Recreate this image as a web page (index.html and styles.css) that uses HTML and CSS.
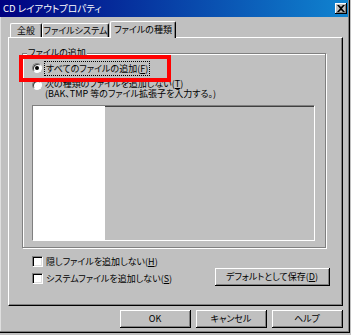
FILE: index.html
```html
<!DOCTYPE html>
<html>

<head>
  <meta name="viewport" content="width=device-width,initial-scale=1">
  <link rel="stylesheet" href="styles.css">
</head>

<body>
  <div class="window">
    <div class="titlebar">
      <span class="title">CD レイアウトプロパティ</span>
      <span class="close">
        <svg width="8" height="7" viewBox="0 0 8 7"><path d="M0 0h2l2 2 2-2h2L5 3.5 8 7H6L4 5 2 7H0l3-3.5z" fill="#000"/></svg>
      </span>
    </div>

    <!-- Tabs -->
    <div class="tabs">
      <div class="tab tab-general">全般</div>
      <div class="tab tab-fs">ファイルシステム</div>
      <div class="tab tab-types active">ファイルの種類</div>
    </div>

    <div class="panel">
      <div class="group">
        <div class="group-title">ファイルの追加</div>

        <div class="radio-row first">
          <span class="radio checked"></span>
          <span class="label focus">すべてのファイルの追加(<u>F</u>)</span>
        </div>

        <div class="radio-row second">
          <span class="radio"></span>
          <span class="label">次の種類のファイルを追加しない(<u>T</u>)<br>(BAK、TMP 等のファイル拡張子を入力する。)</span>
        </div>

        <div class="listbox">
          <div class="list-white"></div>
        </div>

        <!-- highlight box over the first option -->
        <div class="mark"></div>
      </div>

      <div class="options">
        <div class="checks">
          <div class="check-row"><span class="check"></span>隠しファイルを追加しない(<u>H</u>)</div>
          <div class="check-row"><span class="check"></span>システムファイルを追加しない(<u>S</u>)</div>
        </div>
        <button class="btn btn-save">デフォルトとして保存(<u>D</u>)</button>
      </div>
    </div>

    <div class="buttons">
      <button class="btn btn-main">OK</button>
      <button class="btn btn-main">キャンセル</button>
      <button class="btn btn-main">ヘルプ</button>
    </div>
  </div>
</body>

</html>
```

FILE: styles.css
```css
/* Base */

body {
  margin: 0;
  background-color: #c0c0c0;
  font-family: "Noto Sans CJK JP", "Noto Sans", sans-serif;
  font-size: 9px;
  font-feature-settings: "palt";
  color: #000;
  white-space: nowrap;
}

u {
  text-decoration: underline;
  text-underline-offset: 1px;
}

/* Window frame */

.window {
  width: 350px;
  height: 333px;
  background-color: #c0c0c0;
  box-shadow: inset -1px -1px 0 #000, inset -2px -2px 0 #808080, inset 1px 0 0 #dfdfdf;
}

.titlebar {
  width: 348px;
  height: 17px;
  display: flex;
  align-items: center;
  justify-content: space-between;
  background: linear-gradient(to right, #000080, #1084d0);
  color: #fff;
}

.title {
  padding-left: 3px;
  font-size: 9.5px;
  line-height: 17px;
}

.close {
  width: 12px;
  height: 11px;
  margin-right: 1px;
  display: flex;
  align-items: center;
  justify-content: center;
  background-color: #c0c0c0;
  box-shadow: inset -1px -1px 0 #000, inset 1px 1px 0 #fff, inset -2px -2px 0 #808080;
}

/* Tabs */

.tabs {
  display: flex;
  align-items: flex-end;
  height: 16px;
  margin-top: 4px;
  padding-left: 10px;
}

.tab {
  position: relative;
  box-sizing: border-box;
  height: 14px;
  line-height: 13px;
  text-align: center;
  border-top: 1px solid #fff;
  border-left: 1px solid #fff;
  border-right: 1px solid #000;
  border-radius: 2px 2px 0 0;
  box-shadow: inset -1px 0 0 #808080;
}

.tab-general {
  width: 32px;
}

.tab-fs {
  width: 67px;
}

.tab.active {
  width: 66px;
  height: 17px;
  line-height: 15px;
  margin-left: 1px;
  margin-bottom: -1px;
  background-color: #c0c0c0;
  z-index: 1;
}

/* Panel */

.panel {
  box-sizing: border-box;
  width: 335px;
  height: 269px;
  margin-left: 8px;
  border-top: 1px solid #fff;
  border-left: 1px solid #fff;
  border-right: 1px solid #000;
  border-bottom: 1px solid #000;
  box-shadow: inset -1px -1px 0 #808080;
}

.group {
  position: relative;
  box-sizing: border-box;
  width: 304px;
  height: 195px;
  margin: 15px 0 0 13px;
  border: 1px solid #808080;
  box-shadow: inset 1px 1px 0 #fff, 1px 1px 0 #fff;
}

.group-title {
  width: max-content;
  height: 12px;
  line-height: 12px;
  margin: -7px 0 0 4px;
  padding: 0 1px;
  background-color: #c0c0c0;
}

/* Radio buttons */

.radio-row {
  display: flex;
  align-items: flex-start;
  padding-left: 9px;
}

.radio-row.first {
  margin-top: 2px;
  height: 14px;
  align-items: center;
}

.radio-row.second {
  margin-top: 4px;
}

.radio {
  box-sizing: border-box;
  width: 10px;
  height: 10px;
  flex: none;
  border-radius: 50%;
  background-color: #fff;
  border: 1px solid #808080;
  border-right-color: #fff;
  border-bottom-color: #fff;
  box-shadow: inset 1px 1px 0 #404040;
  display: flex;
  align-items: center;
  justify-content: center;
}

.radio.checked::after {
  content: "";
  width: 4px;
  height: 4px;
  border-radius: 50%;
  background-color: #000;
}

.radio-row.second .radio {
  margin-top: 1px;
}

.label {
  margin-left: 3px;
  line-height: 12px;
}

.radio-row.second .label {
  line-height: 10px;
}

.label.focus {
  padding: 0 1px;
  outline: 1px dotted #000;
  line-height: 13px;
}

/* List box */

.listbox {
  box-sizing: border-box;
  width: 283px;
  height: 136px;
  margin: 6px 0 0 9px;
  border-top: 1px solid #808080;
  border-left: 1px solid #808080;
  border-right: 1px solid #fff;
  border-bottom: 1px solid #fff;
  box-shadow: inset 1px 1px 0 #404040;
}

.list-white {
  width: 72px;
  height: 100%;
  background-color: #fff;
}

/* Red highlight */

.mark {
  position: absolute;
  top: 1px;
  left: -4px;
  width: 152px;
  height: 27px;
  box-sizing: border-box;
  border: 4px solid #ff0000;
}

/* Options below the group */

.options {
  display: flex;
  align-items: flex-end;
  margin-top: 7px;
  padding: 0 12px 0 23px;
}

.checks {
  display: flex;
  flex-direction: column;
  gap: 5px;
}

.check-row {
  display: flex;
  align-items: center;
  height: 12px;
}

.check {
  box-sizing: border-box;
  width: 11px;
  height: 11px;
  margin-right: 3px;
  background-color: #fff;
  border-top: 1px solid #808080;
  border-left: 1px solid #808080;
  border-right: 1px solid #fff;
  border-bottom: 1px solid #fff;
  box-shadow: inset 1px 1px 0 #000, inset -1px -1px 0 #dfdfdf;
}

/* Buttons */

.btn {
  box-sizing: border-box;
  height: 18px;
  padding: 0;
  font: inherit;
  line-height: 16px;
  background-color: #c0c0c0;
  border: none;
  border-right: 1px solid #000;
  border-bottom: 1px solid #000;
  box-shadow: inset 1px 1px 0 #fff, inset -1px -1px 0 #808080;
}

.btn-save {
  width: 115px;
  margin-left: auto;
  margin-bottom: -2px;
}

.buttons {
  display: flex;
  justify-content: flex-end;
  gap: 5px;
  margin-top: 4px;
  padding-right: 7px;
}

.btn-main {
  width: 71px;
}
```
